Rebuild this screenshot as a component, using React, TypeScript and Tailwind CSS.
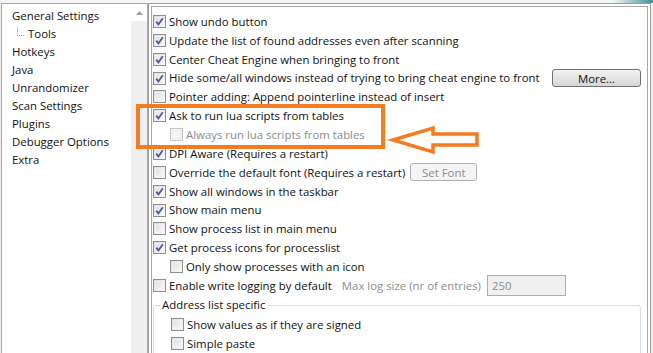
import type { ReactNode } from "react";

const font = { fontFamily: '"Open Sans", "Noto Sans", sans-serif' };

function Check({ checked, disabled }: { checked?: boolean; disabled?: boolean }) {
  return (
    <span
      className={
        "relative flex h-[13px] w-[13px] shrink-0 items-center justify-center border " +
        (disabled
          ? "border-[#c5c5c5] bg-[#f4f4f4]"
          : "border-[#8e8f8f] bg-gradient-to-br from-[#dcdcdc] to-[#fbfbfb]")
      }
    >
      <span className={"absolute inset-[1px] border " + (disabled ? "border-[#ececec]" : "border-[#f4f4f4]/70")} />
      {checked && (
        <svg viewBox="0 0 11 11" className="relative h-[11px] w-[11px]">
          <path d="M2.2 5.6 L4.4 8.4 L8.8 2.2" fill="none" stroke="#4a5c99" strokeWidth="1.8" />
        </svg>
      )}
    </span>
  );
}

function Row({
  checked,
  disabled,
  indent,
  label,
  children,
}: {
  checked?: boolean;
  disabled?: boolean;
  indent?: boolean;
  label: string;
  children?: ReactNode;
}) {
  return (
    <div className={"flex h-[19px] items-center " + (indent ? "pl-[17px]" : "")}>
      <Check checked={checked} disabled={disabled} />
      <span className={"ml-[3px] whitespace-nowrap " + (disabled ? "text-[#8d8d8d]" : "text-[#111]")}>{label}</span>
      {children}
    </div>
  );
}

const tree = ["General Settings", "Tools", "Hotkeys", "Java", "Unrandomizer", "Scan Settings", "Plugins", "Debugger Options", "Extra"];

export default function App() {
  return (
    <div className="relative flex h-[353px] w-[653px] flex-col overflow-hidden bg-[#f0f0f0] text-[11.4px]" style={font}>
      <div className="flex h-[3px] shrink-0">
        <div className="flex-1 bg-[#f4f6f8]" />
        <div className="w-[40px] bg-gradient-to-r from-[#f4f6f8] to-[#3f8f96]" />
      </div>

      <div className="flex min-h-0 flex-1">
        {/* tree */}
        <div className="ml-[1px] flex w-[147px] shrink-0 border border-b-0 border-[#a9a9a9] bg-white">
          <div className="flex-1 pt-[3px] pl-[10px]">
            {tree.map((t) => (
              <div key={t} className="flex h-[18px] items-center whitespace-nowrap text-[#111]">
                {t === "Tools" ? (
                  <>
                    <span className="ml-[5px] mr-[4px] mb-[4px] h-[8px] w-[7px] border-b border-l border-dotted border-[#a0a0a0]" />
                    {t}
                  </>
                ) : (
                  t
                )}
              </div>
            ))}
          </div>
          <div className="flex w-[16px] flex-col bg-[#efefef]">
            <div className="flex h-[17px] items-center justify-center bg-white">
              <svg viewBox="0 0 7 4" className="h-[4px] w-[7px]">
                <path d="M0 4 L3.5 0 L7 4 Z" fill="#9a9a9a" />
              </svg>
            </div>
          </div>
        </div>

        {/* settings panel */}
        <div className="flex min-w-0 flex-1 border border-b-0 border-[#9d9d9d] bg-white p-[2px] pb-0">
          <div className="flex min-w-0 flex-1 flex-col border border-b-0 border-[#a8a8a8] pt-[5px] pl-[1px] pr-[6px]">
            <Row checked label="Show undo button" />
            <Row checked label="Update the list of found addresses even after scanning" />
            <Row checked label="Center Cheat Engine when bringing to front" />
            <Row checked label="Hide some/all windows instead of trying to bring cheat engine to front">
              <button className="ml-auto h-[18px] w-[89px] rounded-[3px] border border-[#707070] bg-gradient-to-b from-[#f2f2f2] to-[#d6d6d6] text-[11.4px] text-[#111]">
                More...
              </button>
            </Row>
            <Row label="Pointer adding: Append pointerline instead of insert" />
            <Row checked label="Ask to run lua scripts from tables" />
            <Row indent disabled label="Always run lua scripts from tables" />
            <Row checked label="DPI Aware (Requires a restart)" />
            <Row label="Override the default font (Requires a restart)">
              <span className="ml-[5px] flex h-[18px] w-[67px] items-center justify-center rounded-[3px] border border-[#adb2b5] bg-[#f4f4f4] text-[#8d8d8d]">
                Set Font
              </span>
            </Row>
            <Row checked label="Show all windows in the taskbar" />
            <Row checked label="Show main menu" />
            <Row label="Show process list in main menu" />
            <Row checked label="Get process icons for processlist" />
            <Row indent label="Only show processes with an icon" />
            <Row label="Enable write logging by default">
              <span className="ml-[10px] whitespace-nowrap text-[#8d8d8d]">Max log size (nr of entries)</span>
              <span className="ml-[6px] flex h-[21px] w-[79px] items-center border border-[#adadad] bg-[#f0f0f0] pl-[4px] text-[#8d8d8d]">
                250
              </span>
            </Row>
            <div className="relative mt-[10px] flex-1 rounded-t-[3px] border border-b-0 border-[#d5dfe5] pl-[17px] pt-[9px]">
              <span className="absolute -top-[10px] left-[6px] bg-white px-[2px] text-[#111]">Address list specific</span>
              <Row label="Show values as if they are signed" />
              <Row label="Simple paste" />
            </div>
          </div>
        </div>
        <div className="w-[2px] shrink-0" />
      </div>

      {/* annotation */}
      <div className="absolute left-[136px] top-[104px] h-[45px] w-[249px] border-[4px] border-[#f47b20]" />
      <svg className="absolute left-0 top-0" width="653" height="353">
        <path
          d="M393 140 L433 128 L433 134 L477 134 L477 145 L433 145 L433 152 Z"
          fill="none"
          stroke="#f47b20"
          strokeWidth="3.5"
          strokeLinejoin="miter"
        />
      </svg>
    </div>
  );
}
